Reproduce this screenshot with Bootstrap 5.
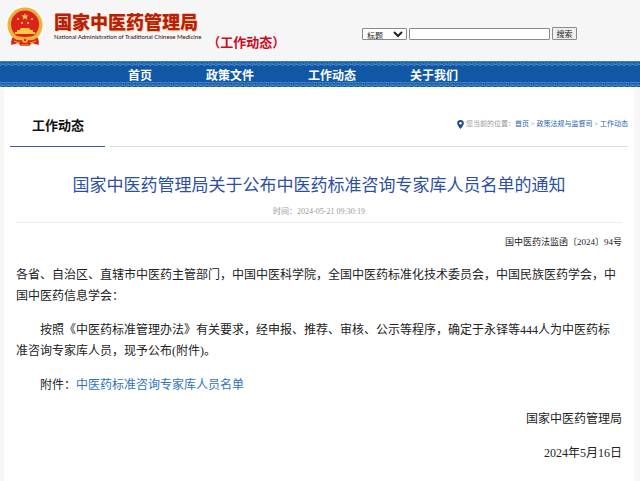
<!DOCTYPE html>
<html lang="zh-CN">
<head>
<meta charset="utf-8">
<meta name="viewport" content="width=device-width, initial-scale=1">
<title>国家中医药管理局</title>
<link href="https://cdn.jsdelivr.net/npm/bootstrap@5.3.0/dist/css/bootstrap.min.css" rel="stylesheet">
<style>
body { background: #f7f7f7; color: #222; font-family: "Liberation Serif", "Noto Sans CJK SC", sans-serif; font-size: 12px; line-height: 21px; }
a { text-decoration: none; color: #2a64ad; }
.site-head { background: linear-gradient(#f6f6f6 52px, #f1f6fb 53px, #f8f6f4); height: 61px; padding: 7px 6px 0; }
.emblem { width: 38px; height: 40px; }
.brand { padding: 3px 0 0 10px; }
.brand-cn { color: #b8200c; font: 900 18px/22px "Noto Sans CJK SC", sans-serif; text-shadow: 1px 1px 0 #f3d9a0; }
.brand-en { color: #3d2216; font: 6px/10px "Lato", sans-serif; font-weight: 500; white-space: nowrap; }
.channel { color: #cf0a1c; font: bold 13px/20px "Noto Sans CJK SC", sans-serif; margin-top: 25px; margin-left: 6px; }
.search { padding: 20px 57px 0 0; gap: 2px; }
.search select, .search input, .search button { font: 8px/10px "Noto Sans CJK SC", sans-serif; border: 1px solid #8a8a8a; border-radius: 1px; background-color: #fff; color: #222; height: 12px; padding: 0; }
.search select { width: 45px; }
.search input { width: 141px; }
.search button { width: 25px; height: 13px; background: #efefef; }
.site-nav { background: #1058a5; color: #8fc0ee; }
.site-nav svg { height: 5px; }
.site-nav ul { gap: 54px; padding-left: 128px; height: 16px; font: bold 12px/17px "Noto Sans CJK SC", sans-serif; }
.site-nav a { color: #fff; }
.sheet { background: #fff; margin: 0 6px 0 4px; padding: 0 6px 12px; min-height: 395px; }
.section-head { gap: 5px; }
.section-title { font: bold 13px/20px "Noto Sans CJK SC", sans-serif; color: #111; width: 95px; padding: 28px 0 11px 22px; border-bottom: 1px solid #3a5ca8; }
.crumbs { border-bottom: 1px solid #ddd; font-size: 7px; line-height: 10px; color: #999; padding-top: 32px; }
.crumbs svg { width: 7px; height: 9px; }
.article { padding: 0 6px; }
.article h1 { font: 17px/24px "Noto Sans CJK SC", sans-serif; color: #2c4fa3; padding-top: 25px; }
.stamp { font-size: 8px; line-height: 12px; color: #999; padding: 10px 0 4px; border-bottom: 1px solid #eee; }
.doc-no { font-size: 9px; line-height: 14px; margin: 12px 0 16px; }
.article .text-line { margin-bottom: 13px; }
.indent { text-indent: 24px; }
.attachment { color: #2f72c0; }
</style>
</head>
<body>
<header class="site-head d-flex align-items-start">
  <svg class="emblem flex-shrink-0" viewBox="0 0 38 40" aria-hidden="true">
    <path d="M7 29 5 38l7-2 3 3h8l3-3 7 2-2-9z" fill="#d8201c"/>
    <circle cx="19" cy="18" r="17.500" fill="#eab13c"/>
    <circle cx="19" cy="17.500" r="14" fill="#dc231b"/>
    <path d="m19 6 .9 2.500h2.700l-2.100 1.700.8 2.600-2.300-1.500-2.300 1.500.8-2.600-2.100-1.700h2.700z" fill="#ffd75a"/>
    <g fill="#ffd75a"><circle cx="12" cy="12" r="1"/><circle cx="26" cy="12" r="1"/><circle cx="16" cy="16" r="1"/><circle cx="22" cy="16" r="1"/></g>
    <path d="M15 21h8l1.500 2H27v2h2v2H9v-2h2v-2h2.500z" fill="#ffc845"/>
    <path d="M6 28q13 4 26 0v2q-13 4-26 0z" fill="#f1b238"/>
    <path d="M6 31q7 4 13 1 6 3 13-1l1 5-6-1-4 2q-4-3-8 0l-4-2-6 1z" fill="#dc231b"/>
    <circle cx="19" cy="33" r="3" fill="#eab13c"/><circle cx="19" cy="33" r="1.200" fill="#dc231b"/>
    <path d="m8 34 6 2m10 0 6-2M15 38h8" stroke="#f1b238" fill="none"/>
  </svg>
  <div class="brand">
    <div class="brand-cn text-nowrap">国家中医药管理局</div>
    <div class="brand-en">National Administration of Traditional Chinese Medicine</div>
  </div>
  <div class="channel text-nowrap">（工作动态）</div>
  <form class="search d-flex align-items-center ms-auto">
    <select aria-label="搜索范围"><option>标题</option></select>
    <input type="text" aria-label="关键词">
    <button type="button">搜索</button>
  </form>
</header>
<nav class="site-nav">
  <svg class="d-block w-100" aria-hidden="true">
    <defs><pattern id="fret" width="6" height="5" patternUnits="userSpaceOnUse"><path d="M0 .5h5v3H2v-1h1M0 4.500h1v-3M5 4.500h1" fill="none" stroke="currentColor" stroke-opacity=".6" stroke-width=".7"/></pattern></defs>
    <rect width="100%" height="5" fill="url(#fret)"/>
  </svg>
  <ul class="list-unstyled d-flex mb-0 text-nowrap">
    <li><a href="#">首页</a></li>
    <li><a href="#">政策文件</a></li>
    <li><a href="#">工作动态</a></li>
    <li><a href="#">关于我们</a></li>
  </ul>
  <svg class="d-block w-100" aria-hidden="true"><rect width="100%" height="5" fill="url(#fret)"/></svg>
</nav>
<main class="sheet">
  <div class="section-head d-flex">
    <h2 class="section-title mb-0">工作动态</h2>
    <div class="crumbs flex-grow-1 text-end">
      <svg viewBox="0 0 7 9" aria-hidden="true"><path d="M3.500 0A3.300 3.300 0 0 0 .2 3.300C.2 5.500 3.500 9 3.500 9s3.300-3.500 3.300-5.700A3.300 3.300 0 0 0 3.500 0zm0 2a1.300 1.300 0 1 1 0 2.600 1.300 1.300 0 0 1 0-2.600z" fill="#1d4c86" fill-rule="evenodd"/></svg>
      您当前的位置：<a href="#">首页</a> &gt; <a href="#">政策法规与监督司</a> &gt; <a href="#">工作动态</a>
    </div>
  </div>
  <article class="article">
    <h1 class="text-center mb-0">国家中医药管理局关于公布中医药标准咨询专家库人员名单的通知</h1>
    <div class="stamp text-center">时间：2024-05-21 09:30:19</div>
    <p class="doc-no text-end">国中医药法监函〔2024〕94号</p>
    <p class="text-line pe-1">各省、自治区、直辖市中医药主管部门，中国中医科学院，全国中医药标准化技术委员会，中国民族医药学会，中国中医药信息学会：</p>
    <p class="text-line indent pe-1">按照《中医药标准管理办法》有关要求，经申报、推荐、审核、公示等程序，确定于永铎等444人为中医药标准咨询专家库人员，现予公布(附件)。</p>
    <p class="text-line indent">附件：<a class="attachment" href="#">中医药标准咨询专家库人员名单</a></p>
    <p class="text-line text-end">国家中医药管理局</p>
    <p class="mb-0 text-end">2024年5月16日</p>
  </article>
</main>
<script src="https://cdn.jsdelivr.net/npm/bootstrap@5.3.0/dist/js/bootstrap.bundle.min.js"></script>
</body>
</html>
